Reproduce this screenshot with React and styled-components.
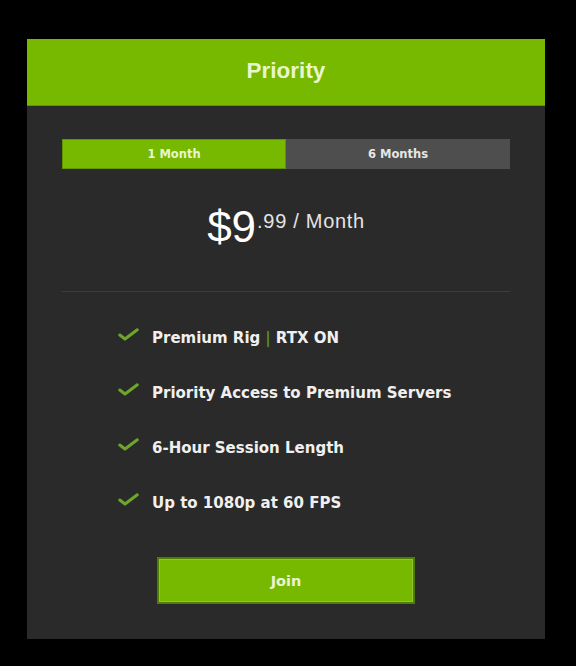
import React, { useState } from 'react';
import styled, { createGlobalStyle } from 'styled-components';

const GlobalStyle = createGlobalStyle`
    html, body {
        margin: 0;
        padding: 0;
        background: #000;
    }
    body {
        font-family: "Liberation Sans", Arial, sans-serif;
    }
`;

const Page = styled.div`
    min-height: 666px;
    padding: 39px 0 0 27px;
    box-sizing: border-box;
`;

const Card = styled.div`
    width: 518px;
    height: 600px;
    background: #2a2a2a;
    display: flex;
    flex-direction: column;
`;

const Header = styled.div`
    height: 67px;
    padding-bottom: 3px;
    background: #76b900;
    display: flex;
    align-items: center;
    justify-content: center;
    color: #eaf5d0;
    font-size: 22.5px;
    font-weight: 700;
    border-bottom: 1px solid #5f9600;
    box-sizing: border-box;
`;

const Body = styled.div`
    padding: 33px 35px 0;
    display: flex;
    flex-direction: column;
    align-items: center;
`;

const Toggle = styled.div`
    width: 448px;
    height: 30px;
    display: grid;
    grid-template-columns: 1fr 1fr;
`;

const Tab = styled.button`
    border: none;
    margin: 0;
    padding: 0;
    font-family: "DejaVu Sans", sans-serif;
    font-size: 11.5px;
    font-weight: 700;
    cursor: pointer;
    background: ${p => (p.$active ? '#76b900' : '#4e4e4e')};
    color: ${p => (p.$active ? '#eaf5d0' : '#e6e6e6')};
    box-shadow: ${p => (p.$active ? 'inset 0 0 0 1px #5f9600' : 'none')};
`;

const Price = styled.div`
    margin-top: 34px;
    height: 48px;
    display: flex;
    align-items: flex-start;
    color: #fff;
    margin-left: 0;
`;

const Dollars = styled.span`
    font-size: 44px;
    line-height: 48px;
`;

const Rest = styled.span`
    font-size: 20px;
    line-height: 20px;
    letter-spacing: 0.7px;
    margin-top: 8px;
    margin-left: 1px;
    color: #e4e4e4;
`;

const Divider = styled.hr`
    width: 448px;
    border: none;
    border-top: 1px solid #3c3c3c;
    margin: 40px 0 0;
`;

const Features = styled.ul`
    list-style: none;
    margin: 36px 0 0;
    padding: 0;
    align-self: flex-start;
    margin-left: 56px;
    display: flex;
    flex-direction: column;
    gap: 35px;
`;

const Feature = styled.li`
    display: flex;
    align-items: center;
    height: 20px;
    color: #f0f0f0;
    font-family: "DejaVu Sans", sans-serif;
    font-size: 15px;
    font-weight: 700;
`;

const Check = styled.svg`
    width: 21px;
    height: 13px;
    margin-right: 13px;
    flex-shrink: 0;
    margin-top: -7px;
`;

const Pipe = styled.span`
    color: #5f8a1c;
    margin: 0 5px;
`;

const JoinButton = styled.button`
    margin-top: 44px;
    width: 258px;
    height: 47px;
    background: #76b900;
    border: 2px solid #4f7d00;
    box-shadow: inset 0 0 0 1px #8fc43a;
    color: #eaf5d0;
    font-family: "DejaVu Sans", sans-serif;
    font-size: 14.5px;
    font-weight: 700;
    cursor: pointer;
`;

function CheckIcon() {
    return (
        <Check viewBox="0 0 21 13">
            <path d="M1.8 7 L7 11 L19.3 1.8" fill="none" stroke="#6ea62a" strokeWidth="3" strokeLinecap="round" strokeLinejoin="round" />
        </Check>
    );
}

const features = [
    ['Premium Rig', 'RTX ON'],
    ['Priority Access to Premium Servers'],
    ['6-Hour Session Length'],
    ['Up to 1080p at 60 FPS'],
];

export default function App() {
    const [plan, setPlan] = useState(0);

    return (
        <Page>
            <GlobalStyle />
            <Card>
                <Header>Priority</Header>
                <Body>
                    <Toggle>
                        <Tab $active={plan === 0} onClick={() => setPlan(0)}>1 Month</Tab>
                        <Tab $active={plan === 1} onClick={() => setPlan(1)}>6 Months</Tab>
                    </Toggle>

                    <Price>
                        <Dollars>$9</Dollars>
                        <Rest>.99 / Month</Rest>
                    </Price>

                    <Divider />

                    <Features>
                        {features.map((f, i) => (
                            <Feature key={i}>
                                <CheckIcon />
                                {f[0]}
                                {f[1] && (
                                    <>
                                        <Pipe>|</Pipe>
                                        {f[1]}
                                    </>
                                )}
                            </Feature>
                        ))}
                    </Features>

                    <JoinButton>Join</JoinButton>
                </Body>
            </Card>
        </Page>
    );
}
